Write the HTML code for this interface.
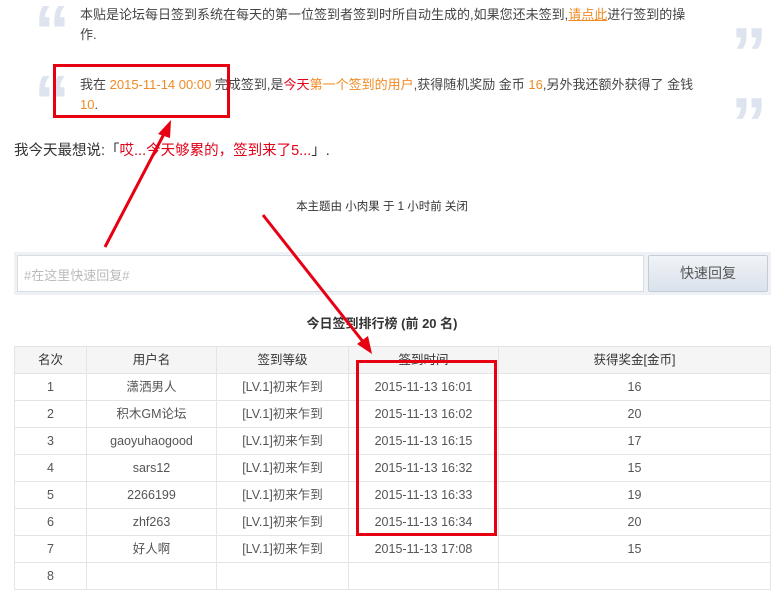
<!DOCTYPE html>
<html><head><meta charset="utf-8"><style>
*{margin:0;padding:0;box-sizing:border-box}
body{width:776px;height:564px;overflow:hidden;background:#fff;font-family:"Liberation Sans","Noto Sans CJK SC",sans-serif;font-size:12px;color:#444;position:relative}
.a{position:absolute}
.q{position:absolute;font-family:"Liberation Sans",sans-serif;font-size:72px;font-weight:bold;color:#dde4ef;line-height:1}
.o{color:#f08a24}.r{color:#e0001a}
table{position:absolute;left:14px;top:346px;width:757px;border-collapse:collapse;font-size:12.5px;color:#555;table-layout:fixed}
td,th{border:1px solid #e4e4e4;height:27px;line-height:25px;padding:0;vertical-align:middle;text-align:center;font-weight:normal;white-space:nowrap;overflow:hidden}
th{background:#f5f5f5;color:#333}
</style></head><body>
<div class="q" style="left:34px;top:-4px">“</div>
<div class="q" style="left:731px;top:18px">”</div>
<div class="q" style="left:34px;top:66px">“</div>
<div class="q" style="left:731px;top:88px">”</div>
<div class="a" style="left:80px;top:5px;width:690px;line-height:20px;font-size:13px;white-space:nowrap">本贴是论坛每日签到系统在每天的第一位签到者签到时所自动生成的,如果您还未签到,<span class="o" style="text-decoration:underline">请点此</span>进行签到的操<br>作.</div>
<div class="a" style="left:80px;top:75px;width:690px;line-height:20px;font-size:13px;white-space:nowrap">我在 <span class="o">2015-11-14 00:00</span> 完成签到,是<span class="r">今天</span><span class="o">第一个签到的用户</span>,获得随机奖励 金币 <span class="o">16</span>,另外我还额外获得了 金钱<br><span class="o">10</span>.</div>
<div class="a" style="left:14px;top:139px;font-size:14.5px;color:#333">我今天最想说:「<span class="r">哎...今天够累的，签到来了5...</span>」.</div>
<div class="a" style="left:0;width:776px;top:198px;text-align:center;font-size:11.5px;color:#333;padding-right:12px">本主题由 小肉果 于 1 小时前 关闭</div>
<div class="a" style="left:14px;top:252px;width:757px;height:43px;background:#eef2f7"></div>
<div class="a" style="left:17px;top:255px;width:627px;height:37px;background:#fff;border:1px solid #d8dde4;color:#bbb;font-size:13px;padding:9px 6px">#在这里快速回复#</div>
<div class="a" style="left:648px;top:255px;width:120px;height:37px;background:linear-gradient(#f1f4f8,#d9e1ea);border:1px solid #c4ccd6;border-radius:2px;color:#555;font-size:14px;text-align:center;line-height:35px">快速回复</div>
<div class="a" style="left:0;width:776px;top:313px;text-align:center;font-size:13px;font-weight:bold;color:#333;padding-right:12px">今日签到排行榜 (前 20 名)</div>
<table>
<tr><th style="width:72px">名次</th><th style="width:130px">用户名</th><th style="width:132px">签到等级</th><th style="width:150px">签到时间</th><th>获得奖金[金币]</th></tr>
<tr><td>1</td><td>潇洒男人</td><td>[LV.1]初来乍到</td><td>2015-11-13 16:01</td><td>16</td></tr>
<tr><td>2</td><td>积木GM论坛</td><td>[LV.1]初来乍到</td><td>2015-11-13 16:02</td><td>20</td></tr>
<tr><td>3</td><td>gaoyuhaogood</td><td>[LV.1]初来乍到</td><td>2015-11-13 16:15</td><td>17</td></tr>
<tr><td>4</td><td>sars12</td><td>[LV.1]初来乍到</td><td>2015-11-13 16:32</td><td>15</td></tr>
<tr><td>5</td><td>2266199</td><td>[LV.1]初来乍到</td><td>2015-11-13 16:33</td><td>19</td></tr>
<tr><td>6</td><td>zhf263</td><td>[LV.1]初来乍到</td><td>2015-11-13 16:34</td><td>20</td></tr>
<tr><td>7</td><td>好人啊</td><td>[LV.1]初来乍到</td><td>2015-11-13 17:08</td><td>15</td></tr>
<tr><td>8</td><td></td><td></td><td></td><td></td></tr>
</table>
<div class="a" style="left:53px;top:64px;width:177px;height:54px;border:3px solid #e60012"></div>
<div class="a" style="left:356px;top:360px;width:141px;height:176px;border:3px solid #e60012"></div>
<svg class="a" style="left:0;top:0" width="776" height="564">
<g stroke="#e60012" stroke-width="3" fill="#e60012">
<line x1="105" y1="247" x2="165" y2="132"/>
<polygon points="171,120 158,134 170,138" stroke="none"/>
<line x1="263" y1="215" x2="364" y2="343"/>
<polygon points="372,354 357,344 368,336" stroke="none"/>
</g></svg>
</body></html>
